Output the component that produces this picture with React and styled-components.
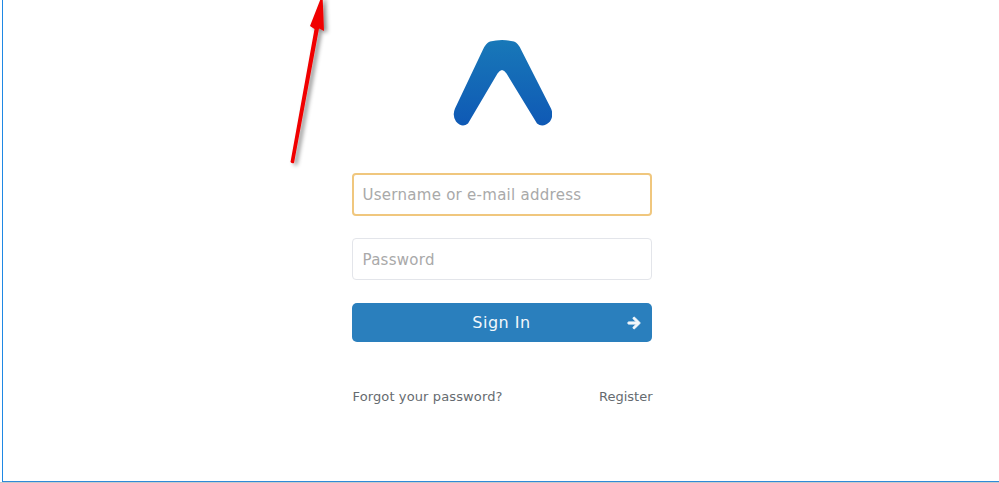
import React from 'react';
import styled, { createGlobalStyle } from 'styled-components';
import { FaArrowRight } from 'react-icons/fa';

const GlobalStyle = createGlobalStyle`
  html, body {
    margin: 0;
    padding: 0;
    background: #fff;
    overflow: hidden;
  }
  body {
    font-family: "DejaVu Sans", Verdana, sans-serif;
  }
`;

const Page = styled.div`
  width: 999px;
  height: 483px;
  box-sizing: border-box;
  border-bottom: 1px solid #c9c9c9;
  padding-left: 2px;
  position: relative;
  overflow: hidden;
`;

const Frame = styled.div`
  height: 482px;
  box-sizing: border-box;
  border-left: 1px solid #1f88e4;
  border-bottom: 1px solid #2f8ad8;
  display: flex;
  flex-direction: column;
  align-items: center;
  padding: 38px 0 0 1px;
`;

const Logo = styled.svg`
  display: block;
  width: 100px;
  height: 88px;
  margin-bottom: 47px;
`;

const Form = styled.form`
  width: 300px;
  display: flex;
  flex-direction: column;
`;

const Input = styled.input`
  box-sizing: border-box;
  width: 100%;
  height: ${(p) => (p.$focused ? '43px' : '42px')};
  margin-bottom: ${(p) => (p.$focused ? '22px' : '23px')};
  padding: ${(p) => (p.$focused ? '0 9px' : '1px 10px 0')};
  border: ${(p) => (p.$focused ? '2px solid #f0c77e' : '1px solid #e3e5ea')};
  border-radius: 4px;
  background: #fff;
  font-family: inherit;
  font-size: 15px;
  letter-spacing: 0.27px;
  outline: none;
  &::placeholder {
    color: #a9a9a9;
    opacity: 1;
  }
`;

const SubmitButton = styled.button`
  position: relative;
  height: 39px;
  width: 100%;
  padding: 0;
  border: none;
  border-radius: 5px;
  background: #2a7fbd;
  color: #f2f7fb;
  font-family: inherit;
  font-size: 16px;
  letter-spacing: 0.5px;
  svg {
    position: absolute;
    right: 11px;
    top: 13px;
    width: 14px;
    height: 14px;
    stroke: currentColor;
    stroke-width: 36px;
  }
`;

const LinkRow = styled.div`
  display: flex;
  justify-content: space-between;
  margin: 46px -1px 0 1px;
`;

const FormLink = styled.a`
  color: #666b70;
  font-size: 13px;
  letter-spacing: ${(p) => p.$spacing || 0};
  line-height: 18px;
  text-decoration: none;
`;

const Annotation = styled.svg`
  position: absolute;
  left: 280px;
  top: 0;
  width: 60px;
  height: 175px;
`;

const App = () => {
  return (
    <>
      <GlobalStyle />
      <Page>
        <Frame>
          <Logo viewBox="-1 -0.5 100 88">
            <defs>
              <linearGradient id="logoFill" x1="0" y1="0" x2="0" y2="1">
                <stop offset="0" stopColor="#1878b8" />
                <stop offset="1" stopColor="#0f59b5" />
              </linearGradient>
            </defs>
            <path
              fill="url(#logoFill)"
              d="M37 3 Q49 0 61 3 Q65 4.5 68 11 L98 70 Q101 77 97 83 Q90 90 84 85 L53.5 35 Q49 28 44.5 35 L15 85 Q9 90 3 83 Q-1 77 2 70 L30 11 Q33 4.5 37 3 Z"
            />
          </Logo>
          <Form>
            <Input $focused type="text" placeholder="Username or e-mail address" />
            <Input type="password" placeholder="Password" />
            <SubmitButton type="button">
              Sign In
              <FaArrowRight />
            </SubmitButton>
            <LinkRow>
              <FormLink href="#" $spacing="0.12px">Forgot your password?</FormLink>
              <FormLink href="#">Register</FormLink>
            </LinkRow>
          </Form>
        </Frame>
        {/* red arrow drawn on top of the screenshot */}
        <Annotation viewBox="280 0 60 175">
          <defs>
            <filter id="arrowShadow" x="-50%" y="-10%" width="200%" height="120%">
              <feDropShadow dx="3" dy="2" stdDeviation="2" floodColor="#000" floodOpacity="0.45" />
            </filter>
          </defs>
          <path
            fill="#f00000"
            filter="url(#arrowShadow)"
            d="M290.5 162 L314.5 29 L310 26 L322.5 -6 L324 31 L319 28.5 L294 163 Q292 164 290.5 162 Z"
          />
        </Annotation>
      </Page>
    </>
  );
};

export default App;
